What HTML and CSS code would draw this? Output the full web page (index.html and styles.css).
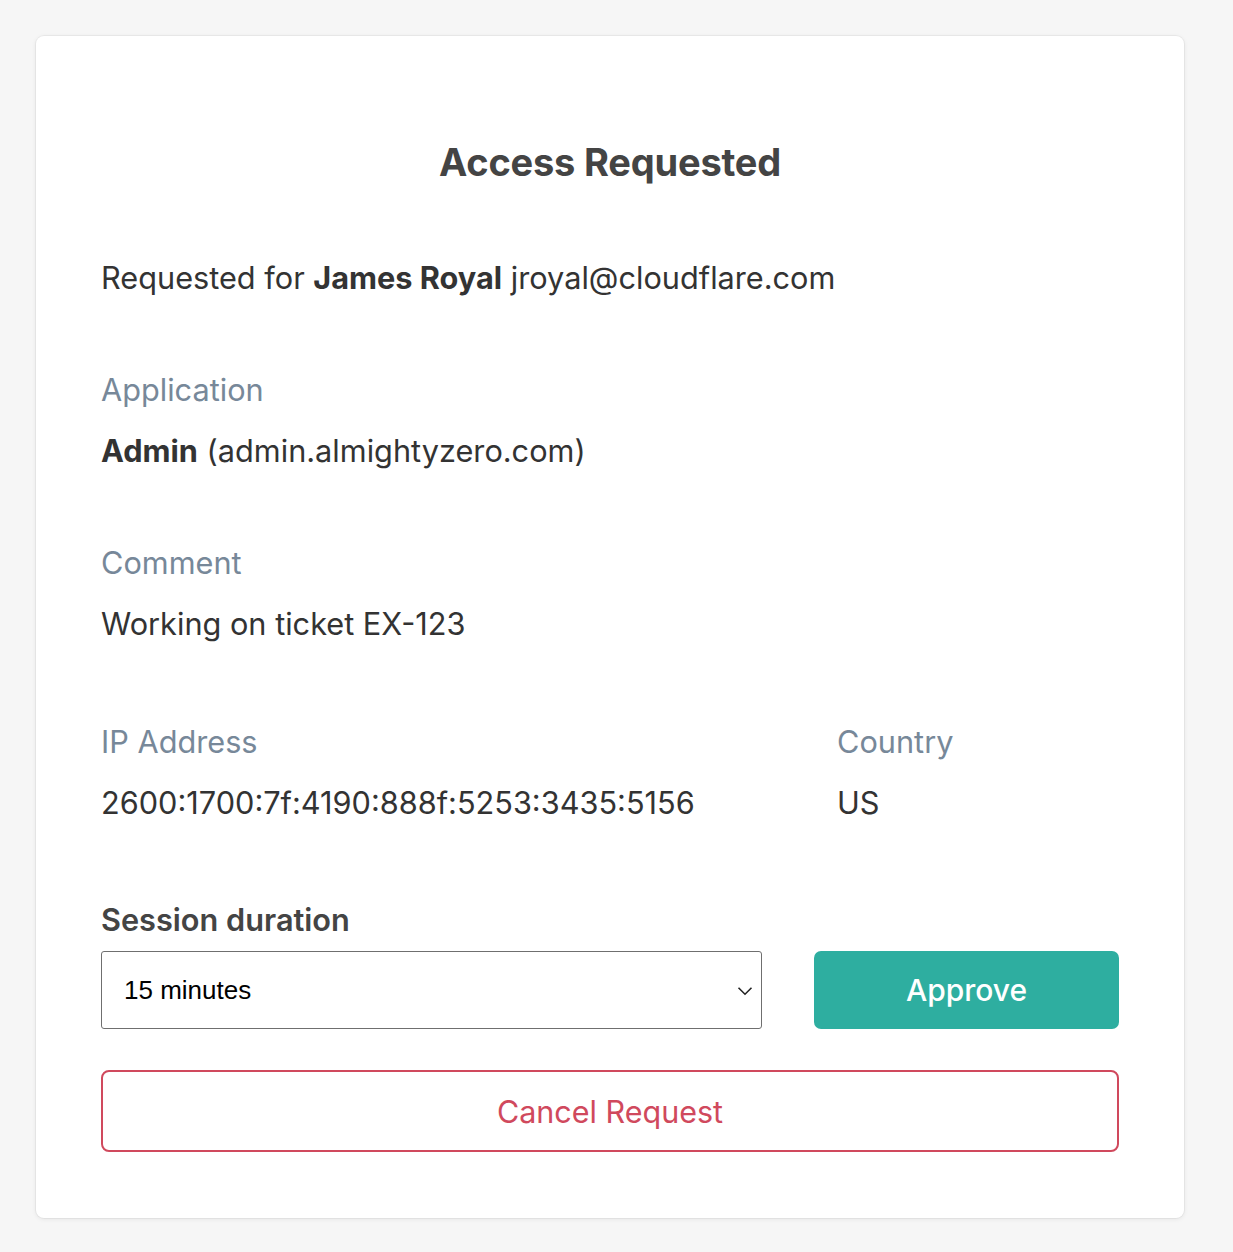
FILE: index.html
```html
<!DOCTYPE html>
<html lang="en">
<head>
<meta charset="utf-8">
<title>Access Requested</title>
<link rel="stylesheet" href="styles.css">
</head>
<body>
<main class="card">
  <h1 class="title">Access Requested</h1>
  <p class="requested">Requested for <strong>James Royal</strong> jroyal@cloudflare.com</p>

  <section class="field">
    <div class="label">Application</div>
    <div class="value"><strong>Admin</strong> (admin.almightyzero.com)</div>
  </section>

  <section class="field">
    <div class="label">Comment</div>
    <div class="value">Working on ticket EX-123</div>
  </section>

  <section class="field-row">
    <div class="field">
      <div class="label">IP Address</div>
      <div class="value">2600:1700:7f:4190:888f:5253:3435:5156</div>
    </div>
    <div class="field">
      <div class="label">Country</div>
      <div class="value">US</div>
    </div>
  </section>

  <div class="session-label">Session duration</div>
  <div class="actions">
    <div class="select-wrap">
      <select class="select">
        <option>15 minutes</option>
        <option>30 minutes</option>
        <option>1 hour</option>
      </select>
      <svg class="chevron" width="16" height="10" viewBox="0 0 16 10"><path d="M1.5 1.8 L8 8.2 L14.5 1.8" fill="none" stroke="#222" stroke-width="1.6"/></svg>
    </div>
    <button class="btn-approve">Approve</button>
  </div>
  <button class="btn-cancel">Cancel Request</button>
</main>
</body>
</html>
```
FILE: styles.css
```css
* { box-sizing: border-box; }
html, body { margin: 0; padding: 0; }
body {
  background: #f6f6f6;
  font-family: Inter, "Noto Sans", sans-serif;
  color: #333;
  padding: 36px 49px 34px 36px;
}
.card {
  background: #fff;
  width: 1148px;
  border-radius: 8px;
  box-shadow: 0 0 0 1px rgba(0,0,0,0.04), 0 1px 5px rgba(0,0,0,0.08);
  padding: 104px 65px 66px 65px;
}
.title {
  margin: 0;
  text-align: center;
  font-size: 38px;
  line-height: 44px;
  font-weight: 700;
  color: #444;
  letter-spacing: -0.2px;
}
.requested {
  margin: 73px 0 0 0;
  font-size: 30.7px;
  line-height: 42px;
}
.requested strong, .value strong { font-weight: 700; }
.field { margin-top: 70px; }
.label {
  font-size: 30.7px;
  line-height: 42px;
  color: #778899;
}
.value {
  font-size: 30.7px;
  line-height: 42px;
  margin-top: 19px;
  color: #333;
}
.field-row {
  display: grid;
  grid-template-columns: 736px 1fr;
  margin-top: 76px;
}
.field-row .field { margin-top: 0; }
.session-label {
  margin-top: 75px;
  font-size: 30.7px;
  line-height: 42px;
  font-weight: 600;
  color: #444;
}
.actions {
  margin-top: 10px;
  display: grid;
  grid-template-columns: 661px 1fr;
  column-gap: 52px;
}
.select-wrap { position: relative; }
.select {
  appearance: none;
  -webkit-appearance: none;
  width: 100%;
  height: 78px;
  border: 1px solid #6f6f6f;
  border-radius: 3px;
  background: #fff;
  font-family: "Liberation Sans", Arial, sans-serif;
  font-size: 26px;
  color: #000;
  padding: 0 40px 0 22px;
}
.chevron {
  position: absolute;
  right: 9px;
  top: 35px;
  pointer-events: none;
}
.btn-approve {
  height: 78px;
  border: none;
  border-radius: 7px;
  background: #2eaea0;
  color: #fff;
  font-family: Inter, "Noto Sans", sans-serif;
  font-size: 30px;
  font-weight: 500;
}
.btn-cancel {
  display: block;
  width: 100%;
  height: 82px;
  margin-top: 41px;
  border: 2px solid #d0495d;
  border-radius: 8px;
  background: #fff;
  color: #d0495d;
  font-family: Inter, "Noto Sans", sans-serif;
  font-size: 30.5px;
  font-weight: 400;
}
```
